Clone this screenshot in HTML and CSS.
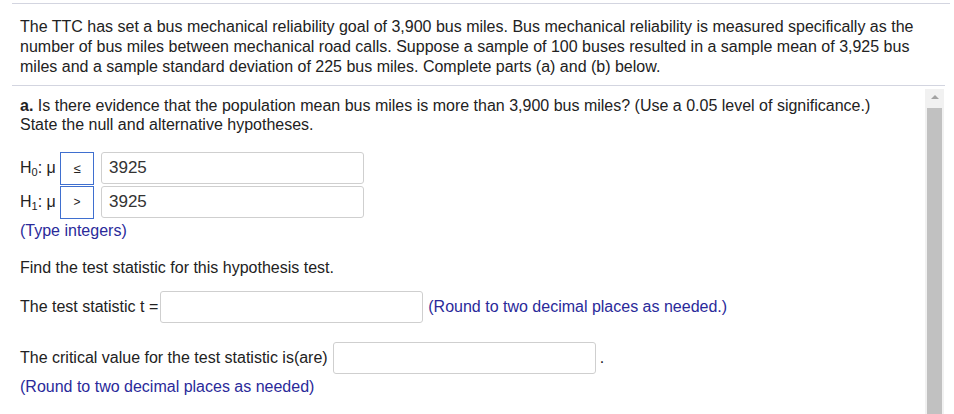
FILE: index.html
```
<!DOCTYPE html>
<html>
<head>
<meta charset="utf-8">
<link rel="stylesheet" href="styles.css">
</head>
<body>
<div class="page">
  <div class="rule rule-top"></div>
  <div class="intro">The TTC has set a bus mechanical reliability goal of 3,900 bus miles. Bus mechanical reliability is measured specifically as the number of bus miles between mechanical road calls. Suppose a sample of 100 buses resulted in a sample mean of 3,925 bus miles and a sample standard deviation of 225 bus miles. Complete parts (a) and (b) below.</div>
  <div class="rule rule-mid"></div>
  <div class="body">
    <div class="content">
      <p class="q"><b>a.</b> Is there evidence that the population mean bus miles is more than 3,900 bus miles? (Use a 0.05 level of significance.)<br>State the null and alternative hypotheses.</p>
      <div class="hyp">
        <div class="hrow">
          <span class="hlabel">H<sub>0</sub>: μ</span>
          <span class="op">≤</span>
          <span class="field wide val">3925</span>
        </div>
        <div class="hrow">
          <span class="hlabel">H<sub>1</sub>: μ</span>
          <span class="op gt">&gt;</span>
          <span class="field wide val">3925</span>
        </div>
      </div>
      <p class="hint hint-type">(Type integers)</p>
      <p class="line find">Find the test statistic for this hypothesis test.</p>
      <div class="arow stat">
        <span>The test statistic t =</span>
        <span class="field wide"></span>
        <span class="hint">(Round to two decimal places as needed.)</span>
      </div>
      <div class="arow crit">
        <span>The critical value for the test statistic is(are)</span>
        <span class="field wide"></span>
        <span class="dot">.</span>
      </div>
      <p class="hint hint-crit">(Round to two decimal places as needed)</p>
    </div>
    <div class="scrollbar">
      <div class="arrow"></div>
      <div class="thumb"></div>
    </div>
  </div>
</div>
</body>
</html>
```
FILE: styles.css
```
html, body {
  margin: 0;
  padding: 0;
  background: #fff;
}
.page {
  width: 954px;
  height: 414px;
  overflow: hidden;
  font-family: "Liberation Sans", Arial, sans-serif;
  font-size: 16px;
  color: #222;
}
.rule {
  height: 0;
  border-top: 1px solid #d3d5e0;
}
.rule-top {
  margin: 3px 4px 0 12px;
}
.intro {
  padding: 13px 20px 0 20px;
  line-height: 20px;
  height: 68px;
}
.rule-mid {
  margin: 0 9px 0 12px;
}
.body {
  display: flex;
  height: 328px;
}
.content {
  width: 925px;
  padding-left: 20px;
  box-sizing: border-box;
}
.q {
  margin: 10px 0 0 0;
  line-height: 19px;
}
.hyp {
  margin-top: 18px;
  display: flex;
  flex-direction: column;
  gap: 2px;
}
.hrow {
  display: flex;
  align-items: center;
  height: 32px;
}
.hlabel {
  width: 40px;
  white-space: nowrap;
}
.hlabel sub {
  font-size: 11px;
  vertical-align: -3px;
}
.op {
  box-sizing: border-box;
  width: 34px;
  height: 33px;
  border: 1px solid #3f6fcf;
  display: flex;
  align-items: center;
  justify-content: center;
  font-size: 13px;
  margin-right: 7px;
}
.op.gt {
  font-size: 12px;
}
.field {
  box-sizing: border-box;
  display: inline-block;
  height: 32px;
  border: 1px solid #cfcfcf;
  border-radius: 3px;
  background: #fff;
}
.wide {
  width: 263px;
}
.val {
  font-size: 17px;
  color: #333;
  padding-left: 7px;
  line-height: 30px;
}
.hint {
  color: #2a2a9a;
}
.hint-type {
  margin: 3px 0 0 0;
  line-height: 20px;
}
.line {
  margin: 0;
  line-height: 20px;
}
.find {
  margin-top: 17px;
}
.arow {
  display: flex;
  align-items: center;
  height: 32px;
}
.stat {
  margin-top: 13px;
}
.stat .field {
  margin: 0 5px 0 2px;
}
.crit {
  margin-top: 19px;
}
.crit .field {
  margin: 0 4px 0 5px;
}
.hint-crit {
  margin: 3px 0 0 0;
  line-height: 20px;
}
.scrollbar {
  width: 19px;
  margin-top: 3px;
  background: #f1f1f1;
  display: flex;
  flex-direction: column;
  align-items: center;
}
.arrow {
  margin-top: 6px;
  width: 0;
  height: 0;
  border-left: 4px solid transparent;
  border-right: 4px solid transparent;
  border-bottom: 4px solid #a3a3a3;
}
.thumb {
  margin-top: 9px;
  width: 15px;
  flex: 1;
  background: #c1c1c1;
}
```
